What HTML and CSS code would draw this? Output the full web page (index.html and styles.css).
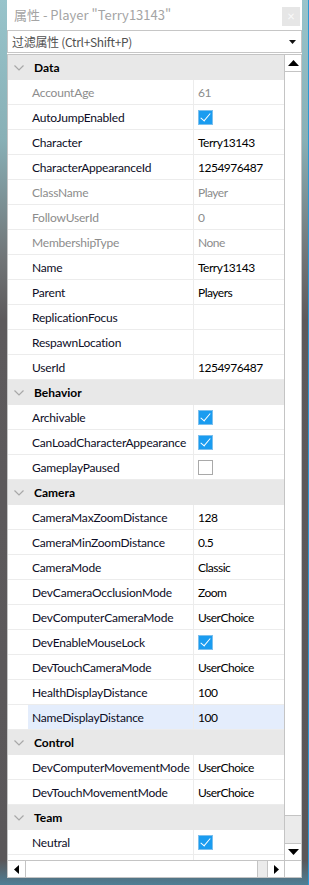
FILE: index.html
```html
<!DOCTYPE html>
<html lang="zh">
<head>
  <meta charset="UTF-8" />
  <title>属性 - Player "Terry13143"</title>
  <link rel="stylesheet" href="styles.css">
</head>
<body>
  <div class="window">
    <div class="titlebar">
      <span class="title">属性 - Player "Terry13143"</span>
      <span class="close">×</span>
    </div>

    <div class="filter">
      <span class="filter-text">过滤属性 (Ctrl+Shift+P)</span>
      <svg class="drop" width="7" height="4" viewBox="0 0 7 4"><path d="M0 0h7L3.5 4z" fill="#111"/></svg>
    </div>

    <div class="grid">
      <div class="rows">
        <!-- Data -->
        <div class="section"><svg class="chev" width="10" height="6" viewBox="0 0 10 6"><path d="M0.5 0.5L5 5L9.5 0.5" fill="none" stroke="#a8a8a8" stroke-width="1.2"/></svg>Data</div>
        <div class="row muted"><div class="name">AccountAge</div><div class="value">61</div></div>
        <div class="row"><div class="name">AutoJumpEnabled</div><div class="value"><span class="check on"></span></div></div>
        <div class="row"><div class="name">Character</div><div class="value">Terry13143</div></div>
        <div class="row"><div class="name">CharacterAppearanceId</div><div class="value">1254976487</div></div>
        <div class="row muted"><div class="name">ClassName</div><div class="value">Player</div></div>
        <div class="row muted"><div class="name">FollowUserId</div><div class="value">0</div></div>
        <div class="row muted"><div class="name">MembershipType</div><div class="value">None</div></div>
        <div class="row"><div class="name">Name</div><div class="value">Terry13143</div></div>
        <div class="row"><div class="name">Parent</div><div class="value">Players</div></div>
        <div class="row"><div class="name">ReplicationFocus</div><div class="value"></div></div>
        <div class="row"><div class="name">RespawnLocation</div><div class="value"></div></div>
        <div class="row"><div class="name">UserId</div><div class="value">1254976487</div></div>

        <!-- Behavior -->
        <div class="section"><svg class="chev" width="10" height="6" viewBox="0 0 10 6"><path d="M0.5 0.5L5 5L9.5 0.5" fill="none" stroke="#a8a8a8" stroke-width="1.2"/></svg>Behavior</div>
        <div class="row"><div class="name">Archivable</div><div class="value"><span class="check on"></span></div></div>
        <div class="row"><div class="name">CanLoadCharacterAppearance</div><div class="value"><span class="check on"></span></div></div>
        <div class="row"><div class="name">GameplayPaused</div><div class="value"><span class="check"></span></div></div>

        <!-- Camera -->
        <div class="section"><svg class="chev" width="10" height="6" viewBox="0 0 10 6"><path d="M0.5 0.5L5 5L9.5 0.5" fill="none" stroke="#a8a8a8" stroke-width="1.2"/></svg>Camera</div>
        <div class="row"><div class="name">CameraMaxZoomDistance</div><div class="value">128</div></div>
        <div class="row"><div class="name">CameraMinZoomDistance</div><div class="value">0.5</div></div>
        <div class="row"><div class="name">CameraMode</div><div class="value">Classic</div></div>
        <div class="row"><div class="name">DevCameraOcclusionMode</div><div class="value">Zoom</div></div>
        <div class="row"><div class="name">DevComputerCameraMode</div><div class="value">UserChoice</div></div>
        <div class="row"><div class="name">DevEnableMouseLock</div><div class="value"><span class="check on"></span></div></div>
        <div class="row"><div class="name">DevTouchCameraMode</div><div class="value">UserChoice</div></div>
        <div class="row"><div class="name">HealthDisplayDistance</div><div class="value">100</div></div>
        <div class="row selected"><div class="name">NameDisplayDistance</div><div class="value">100</div></div>

        <!-- Control -->
        <div class="section"><svg class="chev" width="10" height="6" viewBox="0 0 10 6"><path d="M0.5 0.5L5 5L9.5 0.5" fill="none" stroke="#a8a8a8" stroke-width="1.2"/></svg>Control</div>
        <div class="row"><div class="name">DevComputerMovementMode</div><div class="value">UserChoice</div></div>
        <div class="row"><div class="name">DevTouchMovementMode</div><div class="value">UserChoice</div></div>

        <!-- Team -->
        <div class="section"><svg class="chev" width="10" height="6" viewBox="0 0 10 6"><path d="M0.5 0.5L5 5L9.5 0.5" fill="none" stroke="#a8a8a8" stroke-width="1.2"/></svg>Team</div>
        <div class="row"><div class="name">Neutral</div><div class="value"><span class="check on"></span></div></div>
        <div class="row"><div class="name"></div><div class="value"></div></div>
      </div>

      <div class="vscroll">
        <div class="sbtn"><svg width="11" height="6" viewBox="0 0 11 6"><path d="M0 6h11L5.5 0z" fill="#000"/></svg></div>
        <div class="vtrack"><div class="vthumb"></div></div>
        <div class="sbtn"><svg width="11" height="6" viewBox="0 0 11 6"><path d="M0 0h11L5.5 6z" fill="#000"/></svg></div>
      </div>

      <div class="hscroll">
        <div class="hbtn left"><svg width="5" height="9" viewBox="0 0 5 9"><path d="M5 0v9L0 4.5z" fill="#000"/></svg></div>
        <div class="htrack"><div class="hthumb"></div></div>
        <div class="hbtn right"><svg width="5" height="9" viewBox="0 0 5 9"><path d="M0 0v9L5 4.5z" fill="#000"/></svg></div>
      </div>
      <div class="corner"></div>
    </div>
  </div>
</body>
</html>
```

FILE: styles.css
```css
html, body {
  margin: 0;
  padding: 0;
  height: 100%;
}

body {
  background: linear-gradient(to bottom, #98c4cb 0, #88b0b6 140px, #707476 260px, #5d5a5c 320px, #5a5759 860px, #4f7f96 885px);
  box-shadow: inset -1px 0 #2c98d4;
  font-family: Lato, "Noto Sans CJK SC", sans-serif;
  overflow: hidden;
}

.window {
  margin: 0 7px;
  width: 295px;
  height: 878px;
  background: white;
  display: flex;
  flex-direction: column;
}

.titlebar {
  height: 30px;
  display: flex;
  align-items: center;
  justify-content: space-between;
  padding: 0 2px 0 7px;
}

.title {
  font-family: "Noto Sans CJK SC", "Noto Sans", sans-serif;
  font-size: 13px;
  color: #a4a4a4;
  padding-bottom: 2px;
}

.close {
  width: 18px;
  height: 19px;
  background: #e6e6e6;
  color: #fafafa;
  font-size: 13px;
  line-height: 18px;
  text-align: center;
  margin-top: 3px;
}

.filter {
  height: 21px;
  border: 1px solid #c6c6c6;
  display: flex;
  align-items: center;
  justify-content: space-between;
  padding: 0 5px 0 4px;
}

.filter-text {
  font-family: "Noto Sans CJK SC", "Noto Sans", sans-serif;
  font-size: 12px;
  letter-spacing: -0.3px;
  color: #505050;
}

.drop {
  margin-top: 1px;
}

.grid {
  margin-top: 1px;
  flex: 1;
  border: 1px solid #c4c4c4;
  display: grid;
  grid-template-columns: 276px 17px;
  grid-template-rows: 805px 17px;
}

.rows {
  overflow: hidden;
  font-size: 12px;
  letter-spacing: -0.2px;
  color: #0d0d26;
}

.section {
  height: 25px;
  background: #e8e8e8;
  display: flex;
  align-items: center;
  font-weight: bold;
  letter-spacing: 0;
  color: #000;
  padding-left: 6px;
}

.chev {
  margin-right: 10px;
  margin-top: 1px;
}

.row {
  height: 24px;
  border-bottom: 1px solid #ececec;
  display: grid;
  grid-template-columns: 20px 165px 1fr;
}

.row::before {
  content: "";
  background: white;
}

.name, .value {
  display: flex;
  align-items: center;
  white-space: nowrap;
  overflow: hidden;
  padding-top: 1px;
}

.name {
  padding-left: 4px;
}

.value {
  border-left: 1px solid #ececec;
  padding-left: 4px;
  letter-spacing: -0.5px;
  color: #000;
}

.muted .name, .muted .value {
  color: #8c8c8c;
}

.selected .name, .selected .value {
  background: #e4edfc;
}

.check {
  width: 13px;
  height: 13px;
  border: 1px solid #a9a9a9;
  background: white;
  position: relative;
}

.check.on {
  background: #1a9cf0;
  border-color: #7cc0ee;
}

.check.on::after {
  content: "";
  position: absolute;
  left: 4px;
  top: 0px;
  width: 4px;
  height: 9px;
  border: solid white;
  border-width: 0 1.5px 1.5px 0;
  transform: rotate(40deg);
}

.vscroll {
  border-left: 1px solid #c4c4c4;
  display: flex;
  flex-direction: column;
}

.sbtn {
  height: 17px;
  display: flex;
  align-items: center;
  justify-content: center;
  border-bottom: 1px solid #c4c4c4;
  box-sizing: border-box;
}

.sbtn:last-child {
  border-bottom: none;
  border-top: 1px solid #c4c4c4;
}

.vtrack {
  flex: 1;
  display: flex;
  flex-direction: column;
  justify-content: flex-end;
}

.vthumb {
  height: 27px;
  background: #ebebeb;
  border-top: 1px solid #c4c4c4;
}

.hscroll {
  border-top: 1px solid #c4c4c4;
  display: flex;
}

.hbtn {
  width: 17px;
  display: flex;
  align-items: center;
  justify-content: center;
}

.hbtn.left {
  border-right: 1px solid #c4c4c4;
}

.hbtn.right {
  border-left: 1px solid #c4c4c4;
  width: 16px;
}

.htrack {
  flex: 1;
  display: flex;
  justify-content: flex-end;
}

.hthumb {
  width: 9px;
  background: #ebebeb;
  border-left: 1px solid #c4c4c4;
}

.corner {
  border-top: 1px solid #c4c4c4;
  border-left: 1px solid #c4c4c4;
}
```
